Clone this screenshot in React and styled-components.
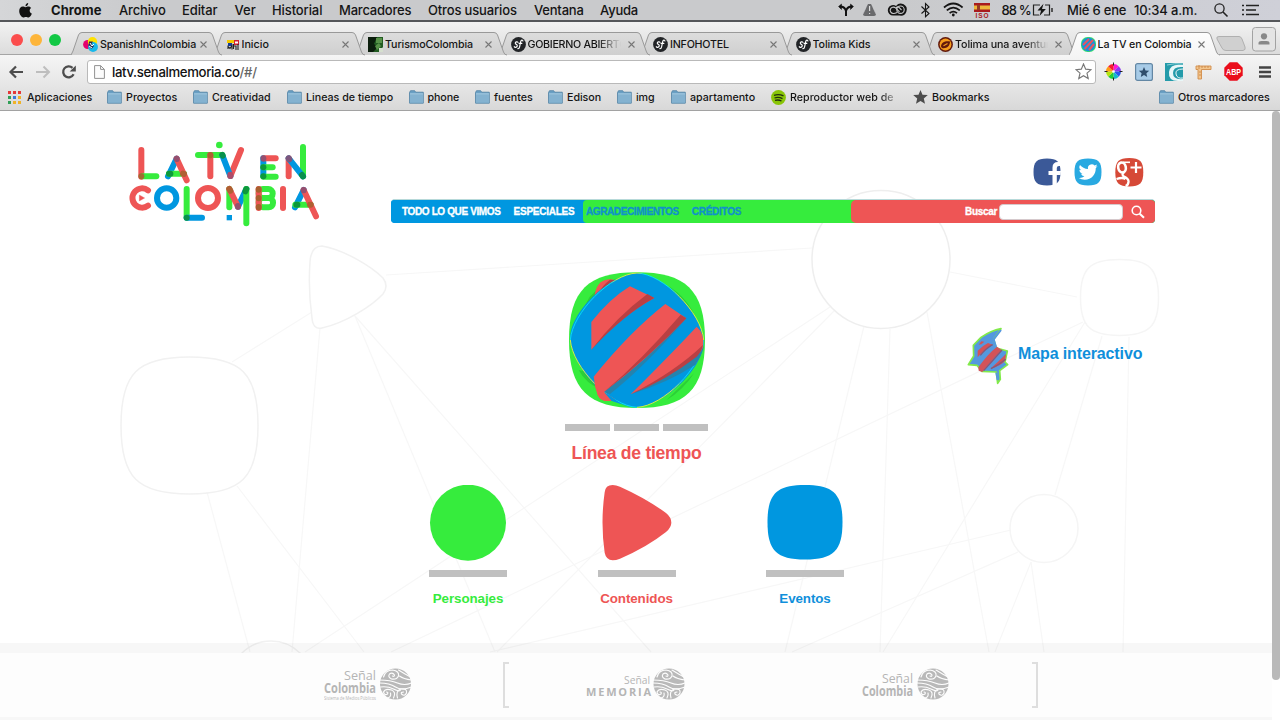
import React from "react";
import styled, { createGlobalStyle } from "styled-components";

const ui = `Inter, Roboto, "Liberation Sans", sans-serif`;
const web = `"Liberation Sans", Arial, sans-serif`;
const BLUE = "#0097e0";
const GREEN = "#36ec3d";
const RED = "#ee5555";

const Global = createGlobalStyle`
  * { box-sizing: border-box; }
  body { margin: 0; background: #fff; overflow: hidden; }
  svg { display: block; flex: none; }
`;

const Screen = styled.div`
  width: 1280px;
  height: 720px;
  display: flex;
  flex-direction: column;
  overflow: hidden;
  background: #fff;
`;

/* ---------- system menu bar ---------- */
const MenuBar = styled.div`
  height: 22px;
  flex: none;
  display: flex;
  align-items: center;
  padding-left: 19px;
  background: linear-gradient(90deg, #d5d6d8, #c9cacc 12%, #c9cacc 70%, #cfd0d8);
  border-bottom: 2px solid #55575a;
  font: 500 13px ${ui};
  color: #151515;
`;
const MenuItem = styled.span`
  width: ${(p) => p.$w}px;
  flex: none;
  white-space: nowrap;
  font-weight: ${(p) => (p.$bold ? 700 : 450)};
  letter-spacing: ${(p) => p.$ls ?? 0}px;
`;

/* ---------- tabs ---------- */
const TabStrip = styled.div`
  height: 33px;
  flex: none;
  display: flex;
  align-items: flex-start;
  background: linear-gradient(#f2f2f2, #dcdcdc);
  border-bottom: 1px solid #a5a5a5;
  position: relative;
`;
const Lights = styled.div`
  width: 71px;
  display: flex;
  gap: 7px;
  padding: 12px 0 0 11px;
  flex: none;
`;
const Light = styled.i`
  width: 12px;
  height: 12px;
  border-radius: 50%;
  background: ${(p) => p.$c};
`;
const TabBox = styled.div`
  position: relative;
  z-index: ${(p) => p.$z};
  width: 142.5px;
  height: 24px;
  margin-top: 10px;
  flex: none;
  display: flex;
  align-items: center;
  padding-left: 12px;
  font: 450 10.7px ${ui};
  color: #151515;
`;
const TabShape = styled.svg`
  position: absolute;
  left: 0;
  top: 0;
  z-index: -1;
`;
const TabTitle = styled.span`
  width: ${(p) => (p.$fade ? 93 : 100)}px;
  margin: 0 ${(p) => (p.$fade ? 7 : 0)}px 0 2px;
  overflow: hidden;
  white-space: nowrap;
  letter-spacing: ${(p) => p.$ls ?? 0}px;
  ${(p) => p.$fade && "mask-image: linear-gradient(90deg, #000 75%, transparent);"}
`;
const TabTail = styled.div`
  display: flex;
  flex: 1;
  justify-content: space-between;
  padding: 5px 4px 0 4px;
`;

/* ---------- toolbar ---------- */
const Toolbar = styled.div`
  height: 30px;
  flex: none;
  display: flex;
  align-items: center;
  padding: 3px 7px 0 8px;
  background: linear-gradient(#f5f5f5, #e6e6e6);
`;
const NavIcons = styled.div`
  width: 79px;
  display: flex;
  gap: 9px;
`;
const Omnibox = styled.div`
  width: 1009px;
  height: 24px;
  flex: none;
  border: 1px solid #b9b9b9;
  border-radius: 3px;
  background: #fff;
  display: flex;
  align-items: center;
  padding: 0 3px 0 6px;
  font: 450 13.2px ${ui};
  color: #111;
`;
const Url = styled.span`
  flex: 1;
  margin-left: 7px;
  letter-spacing: -0.37px;
  em { font-style: normal; color: #666; }
`;
const Extensions = styled.div`
  flex: 1;
  display: flex;
  justify-content: space-between;
  align-items: center;
  padding-left: 8px;
`;

const Bookmarks = styled.div`
  height: 26px;
  flex: none;
  display: flex;
  align-items: center;
  padding: 0 0 1px 8px;
  background: linear-gradient(#e6e6e6, #d8d8d8);
  border-bottom: 1px solid #a2a2a2;
  font: 450 10.7px ${ui};
  color: #151515;
`;
const Mark = styled.div`
  width: ${(p) => p.$w}px;
  flex: none;
  display: flex;
  align-items: center;
  gap: ${(p) => p.$gap ?? 4}px;
  white-space: nowrap;
  overflow: hidden;
  letter-spacing: ${(p) => p.$ls ?? 0}px;
  ${(p) => p.$fade && "mask-image: linear-gradient(90deg, #000 88%, transparent 104%);"}
`;

/* ---------- web page ---------- */
const Page = styled.div`
  position: relative;
  flex: 1;
  display: flex;
  flex-direction: column;
  background: #fff;
  font-family: ${web};
`;
const Backdrop = styled.svg`
  position: absolute;
  left: 0;
  top: 0;
`;
const Scroll = styled.div`
  position: absolute;
  right: 0;
  top: 0;
  width: 8px;
  height: 569px;
  border-radius: 4px;
  background: #b9b9b9;
`;
const Header = styled.header`
  position: relative;
  display: flex;
  height: 129px;
  flex: none;
  padding: 19px 0 0 110px;
`;
const HeaderSide = styled.div`
  width: 764px;
  margin-left: 51px;
  padding-top: 28px;
`;
const Social = styled.div`
  display: flex;
  justify-content: flex-end;
  gap: 13px;
  height: 41px;
  padding-right: 11px;
`;
const Nav = styled.nav`
  display: flex;
  height: 24px;
  border-top: 1px solid #b7d9d9;
  border-radius: 4px;
  overflow: hidden;
  background: ${BLUE};
  font: 700 10px ${web};
  line-height: 24px;
`;
const NavPart = styled.div`
  display: flex;
  align-items: center;
  width: ${(p) => p.$w}px;
  flex: none;
  gap: 13px;
  padding-left: ${(p) => p.$pad}px;
  background: ${(p) => p.$bg};
  color: ${(p) => p.$fg};
  white-space: nowrap;
`;
const GreenPart = styled(NavPart)`
  border-radius: 4px 0 0 4px;
`;
const SearchWrap = styled.div`
  flex: 1;
  background: ${GREEN};
  display: flex;
`;
const Search = styled(NavPart)`
  border-radius: 5px 3px 3px 5px;
  gap: 2px;
`;
const NavText = styled.span`
  letter-spacing: ${(p) => p.$ls ?? 0}px;
  -webkit-text-stroke: 0.3px currentColor;
`;
const Input = styled.span`
  width: 124px;
  height: 16px;
  margin: 1px 6px 0 0;
  border-radius: 4px;
  background: #fff;
  border: 1px solid #d5c9cc;
`;

const Hero = styled.section`
  position: relative;
  display: grid;
  grid-template-columns: 143px 1fr;
  padding: 31px 0 0 565px;
  height: 245px;
  flex: none;
`;
const Timeline = styled.div`
  display: flex;
  flex-direction: column;
  align-items: center;
`;
const Bars = styled.div`
  display: flex;
  gap: 3.6px;
  margin-top: 15px;
`;
const Bar = styled.i`
  display: block;
  width: ${(p) => p.$w}px;
  height: 7px;
  background: #c0c0c0;
`;
const Title = styled.h2`
  margin: 12px 0 0;
  font: 700 17.6px/21px ${web};
  letter-spacing: -0.27px;
  color: ${RED};
  white-space: nowrap;
`;
const MapLink = styled.a`
  display: flex;
  align-items: center;
  height: 60px;
  margin: 55px 0 0 259px;
  gap: 8px;
  font: 700 16px ${web};
  color: #108fdb;
  letter-spacing: -0.12px;
`;
const MapLabel = styled.span`
  padding-bottom: 5px;
`;
const Categories = styled.section`
  position: relative;
  display: flex;
  gap: 90.5px;
  padding-left: 429px;
  height: 158px;
  flex: none;
`;
const Category = styled.div`
  width: 78px;
  display: flex;
  flex-direction: column;
  align-items: center;
`;
const CategoryName = styled.span`
  margin-top: 13px;
  font: 700 13.4px/17px ${web};
  letter-spacing: -0.1px;
  color: ${(p) => p.$c};
`;
const Footer = styled.footer`
  position: relative;
  height: 77px;
  width: 1272px;
  flex: none;
  display: flex;
  border-top: 10px solid rgba(0, 0, 0, 0.03);
  border-bottom: 3px solid #f7f7f7;
  padding: 9px 0 0 324px;
`;
const FooterInner = styled.div`
  position: relative;
  display: flex;
  width: 714px;
  align-items: flex-start;
`;
const Bracket = styled.i`
  width: 6px;
  height: 46px;
  flex: none;
  border: 2px solid #dedede;
  ${(p) => (p.$right ? "border-left: 0;" : "border-right: 0;")}
  margin-left: ${(p) => p.$ml}px;
`;
const FooterFill = styled.div`
  position: absolute;
  inset: 0;
  background: #fdfdfd;
`;
const FooterLogo = styled.svg`
  margin-left: ${(p) => p.$ml ?? 0}px;
`;

/* ---------- drawings ---------- */
const Folder = () => (
  <svg width="15" height="14" viewBox="0 0 15 14">
    <path d="M.5 2.5 1.500.7h4.200l1 1.500h7.600v11H.6z" fill="#6aa0c4" stroke="#4f81a5" strokeWidth=".8" />
    <path d="M1 4h13v8.800H1z" fill="#84b2d0" />
    <path d="M1 3.800h13" stroke="#b5d6ea" strokeWidth=".8" />
  </svg>
);
const Close = () => (
  <svg width="7" height="7" viewBox="0 0 7 7"><path d="M.5.5l6 6M6.500.5l-6 6" stroke="#777" strokeWidth="1.100" /></svg>
);
const Sf = () => (
  <svg width="15" height="15" viewBox="0 0 15 15">
    <circle cx="7.500" cy="7.500" r="7.400" fill="#222427" />
    <path d="M6.900 5.400C6.500 4.400 4 4.700 4.300 6.300c.2 1 2.200 1.100 2 2.600-.2 1.600-2.800 2-3 .7M11.900 4c-.1-1.200-1.800-1.200-2.200.6l-1.100 5.200c-.3 1.500-1.100 2-1.800 1.900M8 6.300h2.900" fill="none" stroke="#fff" strokeWidth="1.150" strokeLinecap="round" />
  </svg>
);
const FavSpanish = () => (
  <svg width="15" height="15" viewBox="0 0 15 15">
    <circle cx="4.700" cy="7.500" r="4.600" fill="#e5006d" /><circle cx="9.500" cy="4.800" r="4.700" fill="#ffe100" />
    <circle cx="10" cy="10" r="4.900" fill="#18b8ea" /><path d="M6 4.500h4L8.500 7l2.500 2-2.500 3-3-3z" fill="#2a2b50" /><path d="M7 6l2 3 2-2M6 9l3 2" stroke="#fff" fill="none" />
  </svg>
);
const FavInicio = () => (
  <svg width="14" height="15" viewBox="-1 0 14 15">
    <path d="M0 3h7v3H0z" fill="#f4c900" /><path d="M1 6h4v3H1z" fill="#173d94" /><path d="M7 3h5v5H7z" fill="#d32232" />
    <path d="M8 4.500h3v2H8z" fill="#fff" /><path d="M1 12V9.500l2 2 2-3v4M6.500 7v5M6.500 9h2.500v4M11 7v6" stroke="#222" strokeWidth="1.100" fill="none" />
  </svg>
);
const FavTurismo = () => (
  <svg width="15" height="15" viewBox="0 0 15 15">
    <path d="M0 0h15v10l-4 5H0z" fill="#225c22" /><path d="M0 0h9L6 7l4 3-5 5H0z" fill="#0b1d0c" /><path d="M8 1h6v5H8zM7 9l4-3 2 3-4 4z" fill="#579148" /><path d="M11 11h4v4h-4z" fill="#d5dfce" />
  </svg>
);
const FavTolima = () => (
  <svg width="15" height="15" viewBox="0 0 15 15">
    <circle cx="7.500" cy="7.500" r="7.400" fill="#62190c" /><circle cx="7.500" cy="7.500" r="5.900" fill="#f59c1c" />
    <path d="M3 9.500C3 5 8 3.500 12 4.500c0 5-4 7.500-8 6.500z" fill="#62190c" /><path d="M5.500 8.800l4-2.400" stroke="#f59c1c" strokeWidth="1.200" />
  </svg>
);
const FavTv = () => (
  <svg width="15" height="15" viewBox="0 0 15 15">
    <rect width="15" height="15" rx="6.500" fill="#35d870" /><circle cx="7.500" cy="7.500" r="6.800" fill="#1493dc" />
    <path d="M2 8l6-6M3.500 12l8.500-9M8 13l5-6" stroke="#e65662" strokeWidth="2" />
  </svg>
);

const tabs = [
  ["SpanishInColombia", <FavSpanish />, -0.15],
  ["Inicio", <FavInicio />, 0],
  ["TurismoColombia", <FavTurismo />, -0.1],
  ["GOBIERNO ABIERTO", <Sf />, -0.3, true],
  ["INFOHOTEL", <Sf />, -0.22],
  ["Tolima Kids", <Sf />, -0.1],
  ["Tolima una aventura", <FavTolima />, -0.1, true],
  ["La TV en Colombia", <FavTv />, -0.13],
];

function Tab({ index, label, icon, ls, fade }) {
  const active = index === 7;
  return (
    <TabBox $z={active ? 20 : 10 - index}>
      <TabShape width="153" height="24" viewBox="0 0 153 24">
        <defs>
          <linearGradient id={"tab" + index} x2="0" y2="1">
            <stop stopColor={active ? "#fdfdfd" : "#dddddd"} /><stop offset="1" stopColor={active ? "#f5f5f5" : "#cfcfcf"} />
          </linearGradient>
        </defs>
        <path d="M0 23Q1 21 2 19L7.500 3Q8.500.5 11 .5H138Q140.500.5 141.500 3L147.500 20Q148.500 23 151 23" fill={`url(#tab${index})`} stroke="#999" />
        {active && <path d="M1 23.400H150" stroke="#f5f5f5" strokeWidth="1.500" />}
      </TabShape>
      {icon}
      <TabTitle $ls={ls} $fade={fade}>{label}</TabTitle>
      <Close />
    </TabBox>
  );
}

const AppleLogo = () => (
  <svg width="13" height="15" viewBox="0 0 13 15">
    <path d="M9.200 0c.1 1.700-1.200 3.100-2.700 3.200C6.300 1.700 7.700.2 9.200 0zM6.600 4.200c.8 0 1.500-.7 2.800-.7 1.200 0 2.200.6 2.800 1.500-2.300 1.400-1.900 4.700.7 5.600-.8 2-2 3.900-3.300 3.900-1 0-1.500-.6-2.700-.6s-1.700.6-2.600.6C2.400 14.500.2 11.200.2 8.100c0-2.900 1.700-4.500 3.500-4.500 1.300 0 2.100.6 2.900.6z" fill="#111" />
  </svg>
);

function StatusIcons() {
  return (
    <svg width="162" height="20" viewBox="836 0 162 20">
      <g fill="none" stroke="#111" strokeWidth="1.700">
        <path d="M846 16V11Q845 7 841 6.500M846 11Q847 7 851 6.500" strokeWidth="2" />
        <path d="M841.500 4l-3 2.500 3 3zM850.500 4l3 2.500-3 3z" fill="#111" strokeWidth=".5" />
      </g>
      <path d="M868 4h3l5 10q0 2-2 2h-9q-2 0-2-2z" fill="#696a6c" />
      <path d="M869.600 6v5M869.600 13v1" stroke="#ddd" strokeWidth="1.200" /><path d="M866 7.500l-3 6.500M873 7.500l3 6.500" stroke="#c9cacc" strokeWidth=".6" />
      <path d="M893 15.500a5.200 5.200 0 0 1 0-10.400q2 0 3 .8a6 6 0 1 1 3.600 9.600z" fill="#151515" />
      <g fill="none" stroke="#c9cacc" strokeWidth="1.100"><path d="M897 12.500q-2 1-3.500 1a3.200 3.200 0 1 1 2-5.600l4 4" /><circle cx="900.500" cy="9.700" r="3.700" /><path d="M896 8q2-2.500 4 .5l1.500 1.500" /></g>
      <path d="M921.500 6.500l7.500 7-3.500 3.200V3.500L929 7l-7.500 6.500" fill="none" stroke="#151515" strokeWidth="1.100" />
      <g fill="none" stroke="#151515" strokeWidth="1.800"><path d="M944 7.500q9.300-8 18.600 0M946.800 10.400q6.500-5.500 13 0M949.600 13.100q3.700-3 7.400 0" /></g><circle cx="953.300" cy="15" r="1.400" fill="#151515" />
      <path d="M974 3h16v9h-16z" fill="#a91b1e" /><path d="M974 5.500h16v4h-16z" fill="#edb83c" /><path d="M977 5h3v5h-3z" fill="#963b24" />
      <text x="975.500" y="18" textLength="13" fontFamily="Liberation Sans" fontWeight="700" fontSize="6.500" fill="#a91b1e">ISO</text>
    </svg>
  );
}
const Battery = () => (
  <svg width="22" height="14" viewBox="0 0 22 14">
    <path d="M8 2H1.500v10H7M13 2h4.500v10H12" fill="none" stroke="#222" strokeWidth="1.200" />
    <path d="M11.500.8 5.500 7.600h3.600L7.500 13l6.400-7H10z" fill="#151515" /><path d="M20 5v4" stroke="#222" strokeWidth="1.400" />
  </svg>
);

const bookmarks = [
  ["Proyectos", 86, 0.02], ["Creatividad", 94, 0], ["Lineas de tiempo", 121.5, 0], ["phone", 66.5, -0.1], ["fuentes", 73, 0.02],
  ["Edison", 69, -0.05], ["img", 54, -0.1], ["apartamento", 100, 0],
];

const Line = ({ c, d }) => <line x1={d[0]} y1={d[1]} x2={d[2]} y2={d[3]} stroke={c} />;
const logoBars = [
  [RED, [94, 60, 94, 140]], [GREEN, [97, 139, 139, 139]],
  [BLUE, [200, 86, 174, 139]], [GREEN, [177, 131, 222, 131]], [RED, [200, 86, 230, 151]],
  [GREEN, [264, 75, 337, 75]], [RED, [301, 75, 301, 139]], [RED, [393, 60, 361, 138]], [BLUE, [337, 76, 361, 138]],
  [BLUE, [460, 85, 460, 139]], [RED, [463, 85, 497, 85]], [GREEN, [460, 112, 488, 112]], [GREEN, [460, 140, 497, 140]],
  [RED, [536, 85, 536, 139]], [GREEN, [579, 51, 579, 139]], [BLUE, [536, 85, 579, 139]],
  [GREEN, [230, 177, 230, 263]], [BLUE, [230, 263, 276, 263]],
  [GREEN, [358, 177, 358, 232]], [BLUE, [409, 177, 384, 230]], [RED, [358, 177, 384, 230]], [GREEN, [409, 177, 409, 280]],
  [RED, [519, 177, 519, 234]],
  [BLUE, [581, 180, 555, 232]], [GREEN, [556, 224, 602, 224]], [RED, [581, 180, 618, 259]],
];
const BROWN = "#a8602f";
const LEAF = "#098f3c";
const PLUM = "#8b4f72";
/* where two bars cross, the inks mix */
const logoMixes = [
  [BROWN, [94, 139, 94, 139]], [PLUM, [200, 86, 200, 87]], [LEAF, [177, 131, 181, 131]], [BROWN, [219, 131, 222, 132]],
  [BROWN, [301, 75, 301, 76]], [LEAF, [337, 75, 338, 77]], ["#c0445c", [361, 134, 361, 138]],
  [PLUM, [460, 85, 460, 86]], [LEAF, [460, 112, 460, 112]], [LEAF, [460, 139, 460, 139]],
  [PLUM, [536, 85, 538, 88]], [LEAF, [576, 135, 579, 139]],
  [LEAF, [230, 263, 230, 263]], [BROWN, [358, 177, 361, 182]], [LEAF, [409, 177, 406, 184]], [PLUM, [384, 228, 384, 230]],
  [PLUM, [581, 180, 581, 181]], [LEAF, [559, 224, 562, 224]], [BROWN, [600, 224, 602, 224]],
];
const Logo = () => (
  <svg width="230" height="110" viewBox="0 0 690 330">
    <g strokeWidth="18" strokeLinecap="round" fill="none">
      {logoBars.map(([c, d], i) => <Line key={i} c={c} d={d} />)}
      <path d="M114 181A29 29 0 1 0 114 227" stroke={RED} />
      <circle cx="170" cy="204" r="29" stroke={BLUE} />
      <circle cx="294" cy="204" r="30" stroke={RED} />
      <g stroke={GREEN}><rect x="446" y="177" width="42" height="27" rx="13" /><rect x="446" y="204" width="43" height="28" rx="13" /></g>
      <Line c={RED} d={[446, 177, 446, 234]} />
      <g stroke={BROWN}><path d="M446 178v1M446 204v1M446 231v1" /></g>
      {logoMixes.map(([c, d], i) => <g key={i} opacity=".9"><path d={`M${d[0]} ${d[1]}L${d[2] + 0.1} ${d[3]}`} stroke={c} /></g>)}
    </g>
    <circle cx="328" cy="45" r="10" fill={GREEN} />
    <path d="M88 195l16 9-16 9z" fill={RED} stroke={RED} />
    <rect x="350" y="255" width="16" height="16" fill={BLUE} />
  </svg>
);

const CYAN = "#08e4f2";
const YELLOW = "#e5f03d";
const ball = [
  ["M61 240C67 158 182 42 261 39", [[0, CYAN], [0.6, CYAN], [0.7, YELLOW], [1, YELLOW]], 61, 261],
  ["M261 39C340 42 455 158 461 240", [[0, YELLOW], [0.1, CYAN], [0.5, CYAN], [0.65, YELLOW], [1, YELLOW]], 261, 461],
  ["M461 240C455 322 340 438 261 442", [[0, YELLOW], [0.55, YELLOW], [0.7, CYAN], [1, CYAN]], 261, 461],
  ["M261 442C182 438 67 322 61 240", [[0, YELLOW], [0.5, YELLOW], [0.65, CYAN], [1, CYAN]], 61, 261],
];
const Sphere = () => (
  <svg width="138" height="138" viewBox="54 33 414 414">
    <defs>
      {ball.map(([, stops, a, b], i) => (
        <linearGradient key={i} id={"edge" + i} gradientUnits="userSpaceOnUse" x1={a} x2={b} y1="0" y2="0">
          {stops.map(([o, c]) => <stop key={o} offset={o} stopColor={c} />)}
        </linearGradient>
      ))}
    </defs>
    <path d="M261 37C405 37 465 90 465 240S405 444 261 444 57 390 57 240 115 37 261 37Z" fill={GREEN} />
    <path d="M80 185L118 112Q150 75 200 55L150 110ZM355 78Q415 115 440 180L380 112ZM86 330q20 40 70 60l-30-50zM350 420Q400 390 432 340L380 390z" fill="#2ccf37" />
    <path d="M133 115Q137 60 178 58Q186 58 198 62L150 110Z" fill={RED} />
    <path d="M143 103Q158 75 180 59L197 61Q170 80 150 100Z" fill="#b94043" />
    <path d="M131 350q3 30 12 54 8 20 32 19 10 0 20-5L162 376z" fill={RED} />
    <path d="M261 39C340 42 455 158 461 240S340 438 261 442 67 322 61 240 182 42 261 39Z" fill={BLUE} />
    {ball.map(([d], i) => <path key={i} d={d} fill="none" stroke={`url(#edge${i})`} strokeWidth="2.800" />)}
    <path d="M124 269V186Q180 115 240 79L313 114Q210 170 124 269Z" fill={RED} />
    <path d="M124 269Q200 170 292 102L313 114Q220 165 124 269Z" fill="#b94043" />
    <path d="M162 396L180 402Q285 320 409 175L392 164Z" fill="#2583ad" />
    <path d="M131 350Q240 215 346 132L409 175Q290 300 162 396L195 418Q185 423 175 423Q150 423 143 404Q134 380 131 350Z" fill={RED} />
    <path d="M162 396L178 406L215 433L185 423Z" fill={BLUE} />
    <path d="M162 396Q275 300 392 164L409 175Q300 290 162 396Z" fill="#b94043" />
    <path d="M242 403Q380 340 461 260Q458 280 435 315Q350 370 242 403Z" fill="#2583ad" />
    <path d="M242 403Q370 275 440 200Q464 220 459 260Q450 300 242 403Z" fill={RED} />
    <path d="M242 403Q375 335 459 255Q455 275 440 290Q350 360 242 403Z" fill="#b94043" />
  </svg>
);

const MapIcon = () => (
  <svg width="43" height="58" viewBox="78 49 129 174">
    <path d="M180 54L158 86L166 112L199 121L192 154L200 162L176 180L178 206L170 218L166 184L122 182L108 164L82 162L98 136L97 104L120 80Q150 60 180 54Z" fill="#5498df" stroke="#82ea49" strokeWidth="5" strokeLinejoin="round" />
    <path d="M180 58L158 86L166 112M170 208L166 186" fill="none" stroke="#5498df" strokeWidth="6" />
    <path d="M110 140V120Q125 105 141 97L155 102Q130 115 110 140ZM112 170Q140 130 168 108L182 118Q155 145 124 184L113 180ZM148 174Q170 155 195 130L193 150Q180 165 148 174ZM113 102l8-10 9 1-9 8z" fill="#d25359" />
    <path d="M118 134Q135 113 155 102M128 180Q155 150 183 118M150 174Q175 162 194 146" fill="none" stroke="#865879" strokeWidth="4" />
  </svg>
);

const squircle = (x, y, w, h) => {
  const p = (a, b) => `${x + a * w} ${y + b * h}`;
  return `M${p(0.5, 0)}C${p(0.88, 0)} ${p(1, 0.12)} ${p(1, 0.5)}S${p(0.88, 1)} ${p(0.5, 1)} ${p(0, 0.88)} ${p(0, 0.5)} ${p(0.12, 0)} ${p(0.5, 0)}Z`;
};

const webLines = [
  [386, 275, 812, 248], [312, 312, 232, 362], [320, 328, 292, 652], [355, 316, 495, 652], [355, 316, 651, 652],
  [830, 307, 305, 652], [835, 310, 497, 652], [1083, 322, 391, 652], [864, 326, 785, 652], [1011, 530, 490, 652],
  [1018, 552, 792, 652], [890, 329, 880, 652], [1085, 322, 883, 652], [927, 312, 989, 652], [1031, 562, 995, 652],
  [1031, 562, 1044, 652], [1129, 337, 1123, 652], [1102, 336, 1055, 495], [950, 272, 1077, 297],
  [207, 492, 250, 652], [237, 486, 364, 652],
];
const Web = () => (
  <Backdrop width="1272" height="609" viewBox="0 111 1272 609">
    <g fill="none" stroke="#f7f7f7" strokeWidth="1.200">
      {webLines.map((d, i) => <line key={i} x1={d[0]} y1={d[1]} x2={d[2]} y2={d[3]} />)}
      <g stroke="#f1f1f1" strokeWidth="1.500">
        <path d="M310 262Q311 246 322 246C345 250 372 267 383 278Q389 286 383 294C372 306 345 323 322 328Q313 330 312 318Q308 290 310 262Z" />
        <path d={squircle(121, 357, 137, 137)} />
        <path d={squircle(1080.5, 259.5, 78, 76)} stroke="#f5f5f5" />
        <circle cx="881" cy="259.500" r="69" stroke="#eeeeee" /><circle cx="1044" cy="528.500" r="34" stroke="#f5f5f5" /><circle cx="271" cy="682" r="41" />
      </g>
    </g>
  </Backdrop>
);

const Globe = ({ x }) => (
  <g transform={`translate(${x} 22)`}>
    <circle r="15.500" fill="#b9b9b9" />
    <g fill="none" stroke="#fdfdfd" strokeWidth="1.150" strokeLinecap="round">
      <path d="M-16-1Q-6-1 0 3T16 3M-15 3Q-8 2-2 5T5 6M-16-4Q-5-4 2-1T16-1M3-14Q11-9 15-7M4-8Q8-5 16-4" />
      <path d="M-12-7Q-10-14-3-14Q4-13 3-8Q1-4-4-5Q-8-7-6-10Q-3-12-1-9Q-1-7-3-8" />
      <path d="M2 14Q0 7 5 5Q12 4 11 9Q9 13 6 10Q5 8 8 8M-2 14Q1 8-4 6Q-10 4-12 8Q-11 12-8 10Q-7 8-9 8M-8 14Q-4 13-5 9" />
    </g>
  </g>
);
const LogoText = ({ x, y, w, s, b, children }) => (
  <text x={x} y={y} textLength={w} lengthAdjust="spacingAndGlyphs" fontFamily="Open Sans" fontSize={s} fontWeight={b ? 700 : 400} fill="#b5b5b5">{children}</text>
);

const Facebook = () => (
  <svg width="28" height="28" viewBox="0 0 28 28">
    <path d={squircle(0.5, 0.5, 27, 27)} fill="#3b5998" />
    <path d="M19.500 27.500V17H15.500V13H19.500V9.500Q19.500 4 25 4H28V8H26Q23.800 8 23.800 10V13H28L27.500 17H23.800V27Z" fill="#fff" />
  </svg>
);
const Twitter = () => (
  <svg width="28" height="28" viewBox="0 0 28 28">
    <path d={squircle(0.5, 0.5, 27, 27)} fill="#29a9e1" />
    <path transform="translate(4.700 4.500) scale(.79)" d="M23.950 4.570a10 10 0 0 1-2.820.77 4.960 4.960 0 0 0 2.160-2.720c-.95.550-2 .960-3.130 1.180a4.920 4.920 0 0 0-8.380 4.480C7.690 8.090 4.070 6.130 1.640 3.160a4.900 4.900 0 0 0 1.520 6.570 4.900 4.900 0 0 1-2.230-.62v.06a4.920 4.920 0 0 0 3.950 4.830 5 5 0 0 1-2.210.08 4.940 4.940 0 0 0 4.600 3.420A9.870 9.870 0 0 1 0 19.540a14 14 0 0 0 7.550 2.210c9.050 0 14-7.500 14-13.980q0-.32-.02-.63a9.940 9.940 0 0 0 2.420-2.570z" fill="#fff" />
  </svg>
);
const GPlus = () => (
  <svg width="29" height="29" viewBox="0 0 29 29">
    <path d={squircle(0.3, 0, 28, 28.5)} fill="#d64937" />
    <g fill="none" stroke="#fff">
      <ellipse cx="7" cy="9.500" rx="3.800" ry="5" strokeWidth="2.600" transform="rotate(-12 7 9.500)" /><path d="M8 4.300h7" strokeWidth="1.600" />
      <path d="M9 14.500q-3 2 0 4 5 2.500 4.500 5.500-.5 3.500-3 4M1.500 21q6-2 9 0" strokeWidth="2.300" /><path d="M21 4v11M15.500 9.500h11" strokeWidth="2.200" />
    </g>
  </svg>
);

export default function App() {
  return (
    <Screen>
      <Global />
      <MenuBar>
        <MenuItem $w={32}><AppleLogo /></MenuItem>
        <MenuItem $w={68} $bold $ls={0.05}>Chrome</MenuItem>
        <MenuItem $w={63} $ls={-0.15}>Archivo</MenuItem>
        <MenuItem $w={52.5} $ls={-0.1}>Editar</MenuItem>
        <MenuItem $w={37.5}>Ver</MenuItem>
        <MenuItem $w={67} $ls={-0.1}>Historial</MenuItem>
        <MenuItem $w={89} $ls={-0.2}>Marcadores</MenuItem>
        <MenuItem $w={106} $ls={-0.15}>Otros usuarios</MenuItem>
        <MenuItem $w={66} $ls={-0.2}>Ventana</MenuItem>
        <MenuItem $w={236} $ls={-0.2}>Ayuda</MenuItem>
        <MenuItem $w={165.5}><StatusIcons /></MenuItem>
        <MenuItem $w={30} $ls={-0.9}>88 %</MenuItem>
        <MenuItem $w={35.5}><Battery /></MenuItem>
        <MenuItem $w={67} $ls={-0.2}>Mié 6 ene</MenuItem>
        <MenuItem $w={79.5} $ls={-0.15}>10:34 a.m.</MenuItem>
        <svg width="46" height="16" viewBox="0 0 46 16" fill="none" stroke="#222">
          <circle cx="5.500" cy="6.500" r="4.600" strokeWidth="1.300" /><path d="M9 10l4.500 4.500" strokeWidth="1.600" />
          <path d="M28 3.500h2M28 8h2M28 12.500h2M32 3.500h13M32 8h10M32 12.500h13" strokeWidth="1.700" />
        </svg>
      </MenuBar>

      <TabStrip>
        <Lights><Light $c="#fb4d4d" /><Light $c="#fdb53a" /><Light $c="#12c845" /></Lights>
        {tabs.map(([label, icon, ls, fade], i) => <Tab key={label} index={i} label={label} icon={icon} ls={ls} fade={fade} />)}
        <TabTail>
          <svg width="32" height="24" viewBox="0 0 32 24"><path d="M4 9.500H24Q26 9.500 27 12L30 20Q31 23 28 23.500H11Q8 23.500 7 21L2 12Q1 9.500 4 9.500Z" fill="#d0d0d0" stroke="#b0b0b0" /></svg>
          <svg width="24" height="25" viewBox="0 0 24 25"><rect x=".5" y=".5" width="23" height="23.500" rx="3" fill="#e4e4e4" stroke="#a2a2a2" /><circle cx="12" cy="9.300" r="3.100" fill="#888" /><path d="M6.500 17.500v-1.500q0-2 3-2h5q3 0 3 2v1.500z" fill="#888" /></svg>
        </TabTail>
      </TabStrip>

      <Toolbar>
        <NavIcons>
          <svg width="16" height="16" viewBox="0 0 16 16"><path d="M15 8H3M8 2.500 2.500 8 8 13.500" fill="none" stroke="#4d4d4d" strokeWidth="2.200" /></svg>
          <svg width="19" height="16" viewBox="-2 0 19 16"><path d="M1 8h12M8.500 2.500 14 8l-5.500 5.500" fill="none" stroke="#bebebe" strokeWidth="2" /></svg>
          <svg width="16" height="16" viewBox="0 0 16 16"><path d="M12.600 10.300A5.500 5.500 0 1 1 11.500 3.800" fill="none" stroke="#4d4d4d" strokeWidth="2.300" /><path d="M14.800 1.500v6H8.700z" fill="#4d4d4d" /></svg>
        </NavIcons>
        <Omnibox>
          <svg width="11" height="14" viewBox="0 0 11 14"><path d="M.6.6h6l3.800 3.800v9H.6zM6.600.6v3.800h3.800" fill="#fcfcfc" stroke="#929292" /></svg>
          <Url>latv.senalmemoria.co<em>/#/</em></Url>
          <svg width="17" height="17" viewBox="0 0 18 18"><path d="M9 1l2.300 5.500 5.700.5-4.300 3.800 1.300 5.700L9 13.400l-5 3.100 1.300-5.700L1 7l5.700-.5z" fill="#fff" stroke="#777" strokeWidth="1.200" /></svg>
        </Omnibox>
        <Extensions>
          <svg width="19" height="19" viewBox="-9.500 -9.500 19 19">
            {["#ff18d1", "#8c37f0", "#2758ed", "#12b9cc", "#1dce38", "#b5e40f", "#ff9b14", "#f71c31"].map((c, i) => <path key={c} d="M0 0V-7.500A7.500 7.500 0 0 1 5.300-5.300Z" fill={c} transform={`rotate(${i * 45})`} />)}
            <path d="M0-9v3M0 9V6M-9 0h3M9 0H6" stroke="#222" /><circle r="1.300" fill="#fff" />
          </svg>
          <svg width="18" height="18" viewBox="0 0 18 18"><rect x=".6" y=".6" width="16.800" height="16.800" rx="2" fill="#a7cbe7" stroke="#6387a4" strokeWidth="1.200" /><path d="M9 4l1.500 3.400 3.700.4-2.800 2.500.8 3.600L9 12l-3.200 1.900.8-3.600-2.800-2.500 3.700-.4z" fill="#2f4e6c" /></svg>
          <svg width="18" height="18" viewBox="0 0 18 18"><path d="M0 0h18v18H0z" fill="#249baa" /><path d="M18 2Q5 0 4 9t9 9h5v-2Q8 17 8 10t10-6z" fill="#e8f7f8" /><path d="M18 6q-8 0-7 5t7 4" fill="none" stroke="#e8f7f8" /><path d="M2 2q7-2 16-1" fill="none" stroke="#8fd0d6" /></svg>
          <svg width="17" height="18" viewBox="0 0 17 18"><path d="M1 3h15v3.500H6.500V16H3V6.500H1z" fill="#f3c58c" stroke="#d18c49" strokeWidth=".9" /><path d="M4 2v4M7 3v2M10 3v2M13 3v2M4 9h2M4 12h2" stroke="#c58243" strokeWidth=".8" /></svg>
          <svg width="19" height="19" viewBox="0 0 19 19"><path d="M5.700.3h7.600l5.400 5.400v7.600l-5.400 5.400H5.700L.3 13.300V5.700z" fill="#ea0d1b" /><text x="2" y="13" textLength="15" lengthAdjust="spacingAndGlyphs" fontFamily="Liberation Sans" fontSize="9" fontWeight="700" fill="#fff">ABP</text></svg>
          <svg width="18" height="14" viewBox="-3 0 18 14"><path d="M1 2.500h12M1 7h12M1 11.500h12" stroke="#444" strokeWidth="2.600" /></svg>
        </Extensions>
      </Toolbar>

      <Bookmarks>
        <Mark $w={99} $gap={6} $ls={-0.03}>
          <svg width="13" height="13" viewBox="0 0 13 13">
            {["#e43838", "#e43838", "#e43838", "#2f9f56", "#3e79d8", "#efb228", "#2f9f56", "#efb228", "#efb228"].map((c, i) => <rect key={i} x={(i % 3) * 5} y={Math.floor(i / 3) * 5} width="3" height="3" fill={c} />)}
          </svg>
          Aplicaciones
        </Mark>
        {bookmarks.map(([t, w, ls]) => <Mark key={t} $w={w} $ls={ls}><Folder />{t}</Mark>)}
        <Mark $w={124} $fade>
          <svg width="15" height="15" viewBox="0 0 15 15"><circle cx="7.500" cy="7.500" r="7.400" fill="#89c507" /><path d="M3 5.300q5-1.600 9.500.6M3.500 8q4-1.300 8 .6M4 10.400q3.500-1 6.500.6" fill="none" stroke="#20320b" strokeWidth="1.300" /></svg>
          Reproductor web de
        </Mark>
        <Mark $w={264}>
          <svg width="33" height="14" viewBox="-18 0 33 14"><path d="M7.500 0l2 4.700 5.300.4-4 3.400 1.200 5.200-4.500-2.800L3 13.700l1.200-5.200-4-3.400 5.300-.4z" fill="#4c4c4c" /></svg>
          Bookmarks
        </Mark>
        <Mark $w={118}><Folder />Otros marcadores</Mark>
      </Bookmarks>

      <Page>
        <Web />
        <Header>
          <Logo />
          <HeaderSide>
            <Social><Facebook /><Twitter /><GPlus /></Social>
            <Nav>
              <NavPart $w={192} $pad={11} $bg={BLUE} $fg="#fff"><NavText $ls={-0.37}>TODO LO QUE VIMOS</NavText><NavText $ls={-0.25}>ESPECIALES</NavText></NavPart>
              <GreenPart $w={268} $pad={3} $bg={GREEN} $fg="#1092c9"><NavText $ls={-0.4}>AGRADECIMIENTOS</NavText><NavText $ls={-0.25}>CRÉDITOS</NavText></GreenPart>
              <SearchWrap>
                <Search $w={304} $pad={114} $bg={RED} $fg="#fff">
                  <NavText $ls={-0.3}>Buscar</NavText><Input />
                  <svg width="14" height="14" viewBox="0 0 14 14"><circle cx="5.500" cy="5.500" r="4.300" fill="none" stroke="#fff" strokeWidth="1.600" /><path d="M8.700 8.700l4.300 4" stroke="#fff" strokeWidth="2.100" /></svg>
                </Search>
              </SearchWrap>
            </Nav>
          </HeaderSide>
        </Header>

        <Hero>
          <Timeline>
            <Sphere />
            <Bars><Bar $w={45} /><Bar $w={45} /><Bar $w={45} /></Bars>
            <Title>Línea de tiempo</Title>
          </Timeline>
          <MapLink><MapIcon /><MapLabel>Mapa interactivo</MapLabel></MapLink>
        </Hero>

        <Categories>
          <Category>
            <svg width="78" height="85" viewBox="0 0 78 85"><circle cx="39" cy="37.700" r="38" fill={GREEN} /></svg>
            <Bar $w={78} /><CategoryName $c={GREEN}>Personajes</CategoryName>
          </Category>
          <Category>
            <svg width="78" height="85" viewBox="564 43 234 255"><path d="M584 65Q586 43 608 43Q618 43 630 48Q710 84 768 127Q784 140 784 156Q784 170 768 184Q710 230 630 264Q618 269 608 269Q588 267 584 246Q571 156 584 65Z" fill={RED} /></svg>
            <Bar $w={78} /><CategoryName $c={RED}>Contenidos</CategoryName>
          </Category>
          <Category>
            <svg width="78" height="85" viewBox="0 0 78 85"><path d={squircle(1.5, 0, 75, 74.5)} fill={BLUE} /></svg>
            <Bar $w={78} /><CategoryName $c="#108fdb">Eventos</CategoryName>
          </Category>
        </Categories>

        <Footer>
          <FooterFill />
          <FooterInner>
            <FooterLogo width="90" height="45" viewBox="0 0 90 45">
              <LogoText x={20} y={18} w={32} s={13}>Señal</LogoText><LogoText x={0} y={31} w={52} s={13.5} b>Colombia</LogoText><LogoText x={0} y={38} w={52} s={5}>Sistema de Medios Públicos</LogoText><Globe x={71.5} />
            </FooterLogo>
            <Bracket $ml={89} />
            <FooterLogo $ml={77} width="100" height="45" viewBox="0 0 100 45">
              <LogoText x={38} y={22} w={26} s={11.5}>Señal</LogoText>
              <text x="0" y="34" textLength="65" fontFamily="Open Sans" fontSize="11" fontWeight="700" fill="#b5b5b5">MEMORIA</text>
              <Globe x={83} />
            </FooterLogo>
            <FooterLogo $ml={176} width="90" height="45" viewBox="0 0 90 45">
              <LogoText x={20} y={21} w={31} s={13}>Señal</LogoText><LogoText x={0} y={34} w={51} s={13.5} b>Colombia</LogoText><Globe x={71} />
            </FooterLogo>
            <Bracket $right $ml={80} />
          </FooterInner>
        </Footer>
        <Scroll />
      </Page>
    </Screen>
  );
}
